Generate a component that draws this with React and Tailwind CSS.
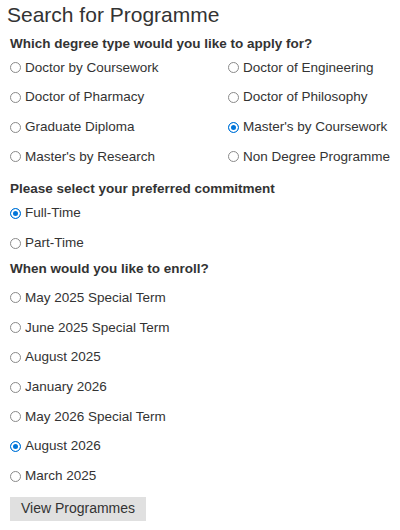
import React, { useState } from 'react';

const degrees = [
  'Doctor by Coursework',
  'Doctor of Engineering',
  'Doctor of Pharmacy',
  'Doctor of Philosophy',
  'Graduate Diploma',
  "Master's by Coursework",
  "Master's by Research",
  'Non Degree Programme',
];

const commitments = ['Full-Time', 'Part-Time'];

const intakes = [
  'May 2025 Special Term',
  'June 2025 Special Term',
  'August 2025',
  'January 2026',
  'May 2026 Special Term',
  'August 2026',
  'March 2025',
];

const Radio = ({ label, checked, onClick }) => (
  <label className="flex items-center h-[29.7px] cursor-pointer whitespace-nowrap" onClick={onClick}>
    <span
      className={
        checked
          ? 'w-[11px] h-[11px] rounded-full border border-[#0075d9] bg-[#0075d9] shadow-[inset_0_0_0_2px_#fff] mr-[4px] shrink-0'
          : 'w-[11px] h-[11px] rounded-full border border-[#8a8a8a] bg-white mr-[4px] shrink-0'
      }
    />
    <span className="text-[13.5px] text-[#333]">{label}</span>
  </label>
);

const App = () => {
  const [degree, setDegree] = useState("Master's by Coursework");
  const [commitment, setCommitment] = useState('Full-Time');
  const [intake, setIntake] = useState('August 2026');

  return (
    <div className="w-[400px] h-[530px] bg-white px-[10px] font-['Liberation_Sans',Arial,sans-serif] text-[#333] overflow-hidden">
      {/* tiêu đề */}
      <h1 className="text-[21px] leading-[28px] -ml-[3px] pt-px">Search for Programme</h1>

      <h2 className="font-bold text-[13.5px] mt-[7px] leading-[16px]">Which degree type would you like to apply for?</h2>
      <div className="grid grid-cols-[218px_1fr] mt-[1px]">
        {degrees.map((d) => (
          <Radio key={d} label={d} checked={degree === d} onClick={() => setDegree(d)} />
        ))}
      </div>

      <h2 className="font-bold text-[13.5px] mt-[9px] leading-[16px]">Please select your preferred commitment</h2>
      <div className="mt-[2px]">
        {commitments.map((c) => (
          <Radio key={c} label={c} checked={commitment === c} onClick={() => setCommitment(c)} />
        ))}
      </div>

      <h2 className="font-bold text-[13.5px] mt-[3px] leading-[16px]">When would you like to enroll?</h2>
      <div className="mt-[6px]">
        {intakes.map((i) => (
          <Radio key={i} label={i} checked={intake === i} onClick={() => setIntake(i)} />
        ))}
      </div>

      <button className="mt-[6px] w-[136px] h-[24px] bg-[#e0e0e0] text-[14px] text-[#333]">
        View Programmes
      </button>
    </div>
  );
};

export default App;
